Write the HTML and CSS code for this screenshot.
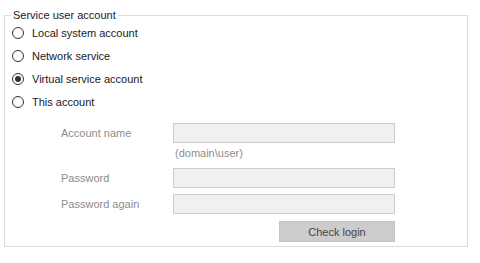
FILE: index.html
```html
<!DOCTYPE html>
<html lang="en">
<head>
    <meta charset="UTF-8">
    <meta name="viewport" content="width=device-width, initial-scale=1.0">
    <title>Service user account</title>
    <link rel="stylesheet" href="styles.css">
</head>
<body>
<fieldset class="account-box">
    <legend>Service user account</legend>
    <div class="radio-row"><span class="radio"></span><span>Local system account</span></div>
    <div class="radio-row"><span class="radio"></span><span>Network service</span></div>
    <div class="radio-row"><span class="radio checked"></span><span>Virtual service account</span></div>
    <div class="radio-row"><span class="radio"></span><span>This account</span></div>

    <div class="login-form">
        <div class="field">
            <label>Account name</label>
            <div class="input"></div>
        </div>
        <div class="hint">(domain\user)</div>
        <div class="field">
            <label>Password</label>
            <div class="input"></div>
        </div>
        <div class="field second">
            <label>Password again</label>
            <div class="input"></div>
        </div>
        <button class="check-btn" disabled>Check login</button>
    </div>
</fieldset>
</body>
</html>
```

FILE: styles.css
```css
/* Общие стили */
body { font-family: "Liberation Sans", Arial, sans-serif; font-size: 11px; margin: 0; padding: 0; background-color: #fff; color: #1a1a1a; }

.account-box {
    margin: 8px 12px 0 4px;
    padding: 0 0 4px 0;
    border: 1px solid #dcdcdc;
    width: 464px;
    box-sizing: border-box;
}

.account-box legend {
    margin-left: 6px;
    padding: 0 2px;
    line-height: 14px;
}

.radio-row {
    display: flex;
    align-items: center;
    height: 23px;
    padding-left: 7px;
}

.radio-row:first-of-type {
    margin-top: -1px;
}

.radio {
    width: 12px;
    height: 12px;
    border: 1px solid #333;
    border-radius: 50%;
    box-sizing: border-box;
    margin-right: 8px;
    position: relative;
}

.radio.checked::after {
    content: "";
    position: absolute;
    left: 2px;
    top: 2px;
    width: 6px;
    height: 6px;
    border-radius: 50%;
    background-color: #333;
}

/* Форма логина (неактивна) */
.login-form {
    margin: 10px 0 0 56px;
    width: 334px;
    color: #8c8c8c;
}

.field {
    display: flex;
    align-items: center;
    height: 20px;
}

.field.second {
    margin-top: 6px;
}

.field label {
    width: 112px;
}

.input {
    flex-grow: 1;
    height: 20px;
    background-color: #f0f0f0;
    border: 1px solid #ccc;
    box-sizing: border-box;
}

.hint {
    margin: 2px 0 7px 114px;
    line-height: 16px;
}

.check-btn {
    display: block;
    margin: 7px 0 0 auto;
    width: 116px;
    height: 21px;
    padding: 0;
    font-family: inherit;
    font-size: 11px;
    color: #444;
    background-color: #ccc;
    border: 1px solid #c4c4c4;
}
```
